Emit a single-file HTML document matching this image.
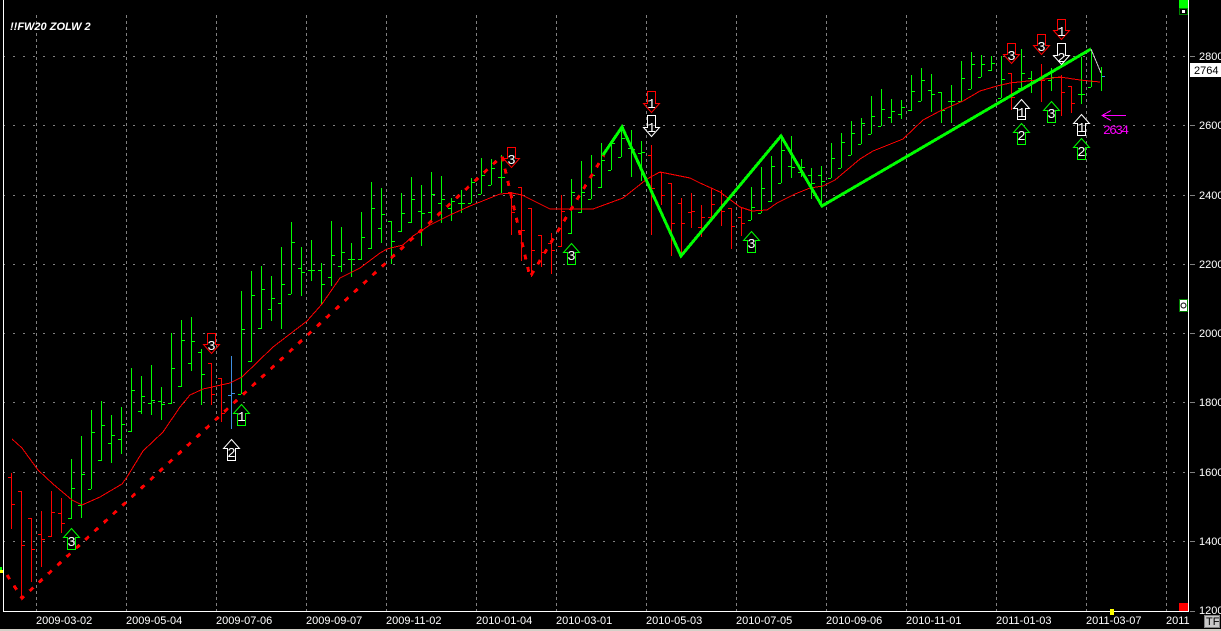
<!DOCTYPE html>
<html><head><meta charset="utf-8"><title>FW20</title>
<style>
html,body{margin:0;padding:0;background:#000;width:1221px;height:631px;overflow:hidden}
svg{display:block}
text{font-family:"Liberation Sans",sans-serif}
.d{font-size:11px;fill:#fff}
.n{font-family:"Liberation Mono",monospace;font-size:14px;fill:#fff;text-anchor:middle}
</style></head><body>
<svg width="1221" height="631" viewBox="0 0 1221 631" xmlns="http://www.w3.org/2000/svg">
<rect width="1221" height="631" fill="#000"/>
<g stroke="#808080" fill="none" shape-rendering="crispEdges">
<path stroke-dasharray="3 3" d="M36.5 15V611M126.5 15V611M216.5 15V611M306.5 15V611M386.5 15V611M476.5 15V611M556.5 15V611M646.5 15V611M736.5 15V611M826.5 15V611M906.5 15V611M996.5 15V611M1086.5 15V611M1166.5 15V611"/>
<path stroke-dasharray="2 8" d="M3 56.5H1195M3 125.5H1195M3 195.5H1195M3 264.5H1195M3 333.5H1195M3 402.5H1195M3 472.5H1195M3 541.5H1195M3 611.5H1195"/>
</g>
<g fill="none" stroke-width="1" shape-rendering="crispEdges">
<path stroke="#ff0000" d="M11.5 473V529M8 477.5h3M12 504.5h3M21.5 491V599M18 491.5h3M22 545.5h3M31.5 518V582M28 518.5h3M32 549.5h3M41.5 511V567M38 534.5h3M42 539.5h3M51.5 491V537M48 536.5h3M52 512.5h3M61.5 498V533M58 513.5h3M62 523.5h3M211.5 363V405M208 363.5h3M212 394.5h3M221.5 378V422M218 378.5h3M222 413.5h3M511.5 192V235M508 192.5h3M512 212.5h3M521.5 187V261M518 187.5h3M522 230.5h3M531.5 208V277M528 208.5h3M532 250.5h3M541.5 235V267M538 235.5h3M542 252.5h3M551.5 233V274M548 243.5h3M552 250.5h3M561.5 195V247M558 246.5h3M562 211.5h3M651.5 145V235M648 155.5h3M652 188.5h3M661.5 172V205M658 172.5h3M662 195.5h3M671.5 183V256M668 183.5h3M672 223.5h3M681.5 198V255M678 203.5h3M682 223.5h3M691.5 193V228M688 212.5h3M692 211.5h3M701.5 205V237M698 227.5h3M702 217.5h3M711.5 188V218M708 217.5h3M712 204.5h3M721.5 190V226M718 210.5h3M722 211.5h3M731.5 208V249M728 208.5h3M732 226.5h3M741.5 208V236M738 217.5h3M742 223.5h3M1011.5 73V110M1008 73.5h3M1012 97.5h3M1041.5 64V102M1038 80.5h3M1042 80.5h3M1061.5 75V116M1058 77.5h3M1062 92.5h3M1071.5 86V113M1068 86.5h3M1072 103.5h3"/>
<path stroke="#00ff00" d="M71.5 459V519M68 518.5h3M72 488.5h3M81.5 436V518M78 505.5h3M82 474.5h3M91.5 410V489M88 489.5h3M92 432.5h3M101.5 401V461M98 460.5h3M102 425.5h3M111.5 415V463M108 443.5h3M112 435.5h3M121.5 407V454M118 439.5h3M122 424.5h3M131.5 368V432M128 431.5h3M132 390.5h3M141.5 376V414M138 411.5h3M142 396.5h3M151.5 365V415M148 403.5h3M152 400.5h3M161.5 387V420M158 401.5h3M162 404.5h3M171.5 333V404M168 403.5h3M172 368.5h3M181.5 320V387M178 386.5h3M182 340.5h3M191.5 317V371M188 363.5h3M192 341.5h3M201.5 349V405M198 352.5h3M202 374.5h3M241.5 291V394M238 394.5h3M242 329.5h3M251.5 271V362M248 361.5h3M252 295.5h3M261.5 266V329M258 328.5h3M262 289.5h3M271.5 276V321M268 309.5h3M272 298.5h3M281.5 247V329M278 303.5h3M282 284.5h3M291.5 222V294M288 294.5h3M292 242.5h3M301.5 247V296M298 268.5h3M302 272.5h3M311.5 240V281M308 270.5h3M312 270.5h3M321.5 263V304M318 270.5h3M322 284.5h3M331.5 221V286M328 277.5h3M332 255.5h3M341.5 227V272M338 266.5h3M342 252.5h3M351.5 243V277M348 259.5h3M352 259.5h3M361.5 212V260M358 259.5h3M362 237.5h3M371.5 182V249M368 248.5h3M372 208.5h3M381.5 188V243M378 228.5h3M382 214.5h3M391.5 221V264M388 221.5h3M392 241.5h3M401.5 193V232M398 231.5h3M402 213.5h3M411.5 177V223M408 222.5h3M412 199.5h3M421.5 185V246M418 211.5h3M422 213.5h3M431.5 172V223M428 212.5h3M432 194.5h3M441.5 176V223M438 203.5h3M442 199.5h3M451.5 198V221M448 208.5h3M452 201.5h3M461.5 190V213M458 203.5h3M462 203.5h3M471.5 178V203M468 203.5h3M472 182.5h3M481.5 158V194M478 194.5h3M482 175.5h3M491.5 159V185M488 185.5h3M492 168.5h3M501.5 155V193M498 177.5h3M502 177.5h3M571.5 179V234M568 233.5h3M572 192.5h3M581.5 161V213M578 212.5h3M582 192.5h3M591.5 155V199M588 199.5h3M592 175.5h3M601.5 143V188M598 187.5h3M602 160.5h3M611.5 142V170M608 170.5h3M612 143.5h3M621.5 127V157M618 157.5h3M622 138.5h3M631.5 130V177M628 148.5h3M632 149.5h3M641.5 141V181M638 153.5h3M642 152.5h3M751.5 187V220M748 220.5h3M752 207.5h3M761.5 167V213M758 213.5h3M762 188.5h3M771.5 156V202M768 201.5h3M772 166.5h3M781.5 135V183M778 183.5h3M782 150.5h3M791.5 136V178M788 166.5h3M792 167.5h3M801.5 159V177M798 172.5h3M802 167.5h3M811.5 168V199M808 175.5h3M812 183.5h3M821.5 166V203M818 175.5h3M822 181.5h3M831.5 143V178M828 178.5h3M832 158.5h3M841.5 133V168M838 168.5h3M842 142.5h3M851.5 121V155M848 155.5h3M852 133.5h3M861.5 118V144M858 144.5h3M862 123.5h3M871.5 96V134M868 134.5h3M872 116.5h3M881.5 89V126M878 126.5h3M882 109.5h3M891.5 99V123M888 117.5h3M892 111.5h3M901.5 100V119M898 114.5h3M902 107.5h3M911.5 75V111M908 110.5h3M912 91.5h3M921.5 68V101M918 101.5h3M922 80.5h3M931.5 74V112M928 90.5h3M932 94.5h3M941.5 92V123M938 92.5h3M942 110.5h3M951.5 85V123M948 101.5h3M952 101.5h3M961.5 61V101M958 101.5h3M962 78.5h3M971.5 52V89M968 89.5h3M972 64.5h3M981.5 55V77M978 77.5h3M982 64.5h3M991.5 56V71M988 70.5h3M992 63.5h3M1001.5 56V98M998 98.5h3M1002 79.5h3M1021.5 49V89M1018 88.5h3M1022 73.5h3M1031.5 71V93M1028 78.5h3M1032 82.5h3M1051.5 68V91M1048 80.5h3M1052 77.5h3M1081.5 57V104M1078 94.5h3M1082 94.5h3M1091.5 50V87M1088 87.5h3M1092 81.5h3M1101.5 67V91"/>
<path stroke="#3f8fe0" d="M231.5 356V429M228 395.5h3M232 393.5h3M1102 76.5h3"/>
</g>
<polyline fill="none" stroke="#f00" stroke-width="1" shape-rendering="crispEdges" points="12,439 22,448 38,470 53,484 72,500 82,505 100,497 122,484 127,477 143,451 163,432 180,407 190,395 203,389 230,383 242,377 273,347 307,321 322,304 340,278 360,268 380,253 387,249 403,245 413,236 430,225 450,215 470,206 500,194 512,193 522,195 550,209 593,209 623,198 647,179 660,172 690,178 700,183 720,192 740,207 752,211 767,210 777,203 795,194 810,188 823,186 835,180 860,159 873,151 903,139 923,120 940,111 963,101 980,91 997,86 1010,83 1037,80 1060,77 1080,80 1100,82"/>
<path fill="none" stroke="#f00" stroke-width="3" stroke-dasharray="5 7.6" shape-rendering="crispEdges" d="M7 575L22 598L502 156L530 277L604 155"/>
<path fill="none" stroke="#00ff00" stroke-width="3" shape-rendering="crispEdges" d="M603 155L622 127L681 256L781 136L822 206L1091 49"/>
<path fill="none" stroke="#c8c8c8" stroke-width="1" shape-rendering="crispEdges" d="M1091 49L1101 73"/>
<g fill="none" stroke-width="1">
<g stroke="#00ff00">
<path d="M71.5 528.5L79.5 537.5H75.5V549.5H67.5V537.5H63.5Z"/>
<path d="M241.5 404.5L249.5 413.5H245.5V425.5H237.5V413.5H233.5Z"/>
<path d="M571.5 243.5L579.5 252.5H575.5V264.5H567.5V252.5H563.5Z"/>
<path d="M751.5 231.5L759.5 240.5H755.5V252.5H747.5V240.5H743.5Z"/>
<path d="M1021.5 123.5L1029.5 132.5H1025.5V144.5H1017.5V132.5H1013.5Z"/>
<path d="M1051.5 101.5L1059.5 110.5H1055.5V122.5H1047.5V110.5H1043.5Z"/>
<path d="M1081.5 138.5L1089.5 147.5H1085.5V159.5H1077.5V147.5H1073.5Z"/>
</g>
<g stroke="#fff">
<path d="M231.5 439.5L239.5 448.5H235.5V460.5H227.5V448.5H223.5Z"/>
<path d="M1021.5 99.5L1029.5 108.5H1025.5V119.5H1017.5V108.5H1013.5Z"/>
<path d="M1081.5 114.5L1089.5 123.5H1085.5V135.5H1077.5V123.5H1073.5Z"/>
<path d="M651.5 136.5L659.5 127.5H655.5V115.5H647.5V127.5H643.5Z"/>
<path d="M1061.5 64.5L1069.5 55.5H1065.5V43.5H1057.5V55.5H1053.5Z"/>
</g>
<g stroke="#f00">
<path d="M211.5 353.5L219.5 344.5H215.5V333.5H207.5V344.5H203.5Z"/>
<path d="M511.5 167.5L519.5 158.5H515.5V147.5H507.5V158.5H503.5Z"/>
<path d="M651.5 112.5L659.5 103.5H655.5V91.5H647.5V103.5H643.5Z"/>
<path d="M1011.5 63.5L1019.5 54.5H1015.5V43.5H1007.5V54.5H1003.5Z"/>
<path d="M1041.5 54.5L1049.5 45.5H1045.5V34.5H1037.5V45.5H1033.5Z"/>
<path d="M1061.5 39.5L1069.5 30.5H1065.5V19.5H1057.5V30.5H1053.5Z"/>
</g>
</g>
<text class="n" x="71.5" y="546">3</text>
<text class="n" x="231.5" y="457">2</text>
<text class="n" x="241.5" y="421">1</text>
<text class="n" x="211.5" y="350">3</text>
<text class="n" x="511.5" y="164">3</text>
<text class="n" x="571.5" y="260">3</text>
<text class="n" x="651.5" y="108">1</text>
<text class="n" x="651.5" y="132">1</text>
<text class="n" x="751.5" y="248">3</text>
<text class="n" x="1011.5" y="60">3</text>
<text class="n" x="1041.5" y="51">3</text>
<text class="n" x="1061.5" y="36">1</text>
<text class="n" x="1061.5" y="62">2</text>
<text class="n" x="1021.5" y="117">1</text>
<text class="n" x="1021.5" y="140">2</text>
<text class="n" x="1051.5" y="118">3</text>
<text class="n" x="1081.5" y="132">1</text>
<text class="n" x="1081.5" y="156">2</text>
<path fill="none" stroke="#ff00ff" stroke-width="1" shape-rendering="crispEdges" d="M1126 115.5H1102M1111 110.5L1102 115.5L1111 120.5"/>
<text x="1103" y="134" textLength="26" lengthAdjust="spacing" style="font-family:'Liberation Mono',monospace;font-size:13px;fill:#ff00ff">2634</text>
<g shape-rendering="crispEdges">
<rect x="3" y="0" width="1" height="612" fill="#fff"/>
<rect x="3" y="611" width="1186" height="1" fill="#fff"/>
<rect x="1188" y="0" width="1" height="612" fill="#fff"/>
<path stroke="#808080" d="M1190 56.5h4M1190 125.5h4M1190 195.5h4M1190 264.5h4M1190 333.5h4M1190 402.5h4M1190 472.5h4M1190 541.5h4M1190 611.5h4"/>
<rect x="1179" y="0" width="9" height="8" fill="#00ff00"/>
<rect x="1179.5" y="8.5" width="8" height="6" fill="#000" stroke="#008000"/>
<rect x="1182" y="10" width="3" height="3" fill="#fff"/>
<rect x="1179.5" y="299.5" width="8" height="12" fill="#fff" stroke="#008000"/>
<rect x="1179" y="603" width="9" height="8" fill="#f00"/>
<rect x="1110" y="609" width="4" height="6" fill="#ff0"/>
<rect x="0" y="567" width="2" height="3" fill="#00ff00"/>
<rect x="0" y="570" width="3" height="3" fill="#ff0"/>
<rect x="1190" y="63" width="31" height="14" fill="#fff"/>
<rect x="1204.5" y="615.5" width="15" height="12" fill="#c8c8c8" stroke="#808080"/>
<rect x="0" y="629" width="1221" height="2" fill="#d4d0c8"/>
</g>
<circle cx="1183.5" cy="305.5" r="2.5" fill="none" stroke="#000" stroke-width="1"/>
<text x="10" y="30" style="font-size:11px;font-weight:bold;font-style:italic;fill:#fff">!!FW20 ZOLW 2</text>
<text class="d" x="1199" y="60">2800</text>
<text x="1194" y="74" style="font-size:11px;fill:#000">2764</text>
<text class="d" x="1199" y="129">2600</text>
<text class="d" x="1199" y="199">2400</text>
<text class="d" x="1199" y="268">2200</text>
<text class="d" x="1199" y="337">2000</text>
<text class="d" x="1199" y="406">1800</text>
<text class="d" x="1199" y="476">1600</text>
<text class="d" x="1199" y="545">1400</text>
<text class="d" x="1199" y="614">1200</text>
<text class="d" x="36" y="624">2009-03-02</text>
<text class="d" x="126" y="624">2009-05-04</text>
<text class="d" x="216" y="624">2009-07-06</text>
<text class="d" x="306" y="624">2009-09-07</text>
<text class="d" x="386" y="624">2009-11-02</text>
<text class="d" x="476" y="624">2010-01-04</text>
<text class="d" x="556" y="624">2010-03-01</text>
<text class="d" x="646" y="624">2010-05-03</text>
<text class="d" x="736" y="624">2010-07-05</text>
<text class="d" x="826" y="624">2010-09-06</text>
<text class="d" x="906" y="624">2010-11-01</text>
<text class="d" x="996" y="624">2011-01-03</text>
<text class="d" x="1086" y="624">2011-03-07</text>
<text class="d" x="1166" y="624">2011</text>
<text x="1206" y="625" style="font-size:11px;fill:#000">TF</text>
</svg>
</body></html>
